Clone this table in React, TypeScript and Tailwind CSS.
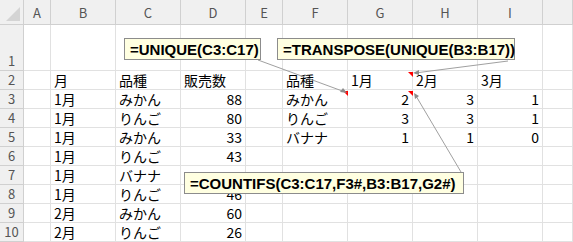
import React from "react";

type Cell = { t: string; r?: boolean };

const cols = [
  { l: "A", w: "w-[27px]" },
  { l: "B", w: "w-[65px]" },
  { l: "C", w: "w-[65px]" },
  { l: "D", w: "w-[65px]" },
  { l: "E", w: "w-[37px]" },
  { l: "F", w: "w-[65px]" },
  { l: "G", w: "w-[65px]" },
  { l: "H", w: "w-[65px]" },
  { l: "I", w: "w-[65px]" },
  { l: "", w: "w-[30px]" },
];

const L = (t: string): Cell => ({ t });
const N = (t: string): Cell => ({ t, r: true });
const E: Cell = { t: "" };

const rows: { n: string; h: string; cells: Cell[] }[] = [
  { n: "1", h: "h-[46px]", cells: [E, E, E, E, E, E, E, E, E, E] },
  { n: "2", h: "h-[19px]", cells: [E, L("月"), L("品種"), L("販売数"), E, L("品種"), L("1月"), L("2月"), L("3月"), E] },
  { n: "3", h: "h-[19px]", cells: [E, L("1月"), L("みかん"), N("88"), E, L("みかん"), N("2"), N("3"), N("1"), E] },
  { n: "4", h: "h-[19px]", cells: [E, L("1月"), L("りんご"), N("80"), E, L("りんご"), N("3"), N("3"), N("1"), E] },
  { n: "5", h: "h-[19px]", cells: [E, L("1月"), L("みかん"), N("33"), E, L("バナナ"), N("1"), N("1"), N("0"), E] },
  { n: "6", h: "h-[19px]", cells: [E, L("1月"), L("りんご"), N("43"), E, E, E, E, E, E] },
  { n: "7", h: "h-[19px]", cells: [E, L("1月"), L("バナナ"), E, E, E, E, E, E, E] },
  { n: "8", h: "h-[19px]", cells: [E, L("1月"), L("りんご"), N("46"), E, E, E, E, E, E] },
  { n: "9", h: "h-[19px]", cells: [E, L("2月"), L("みかん"), N("60"), E, E, E, E, E, E] },
  { n: "10", h: "h-[19px]", cells: [E, L("2月"), L("りんご"), N("26"), E, E, E, E, E, E] },
];

const cellFont = "font-['Noto_Sans_CJK_JP','Noto_Sans',sans-serif]";
const noteFont = "font-['Liberation_Sans',Arial,sans-serif]";

function Note({ text, cls }: { text: string; cls: string }) {
  return (
    <div
      className={`absolute ${cls} h-[22px] flex items-center px-[5px] bg-[#ffffe1] border border-[#8c8c8c] text-black font-bold text-[15px] leading-none ${noteFont} whitespace-nowrap`}
    >
      {text}
    </div>
  );
}

export default function App() {
  return (
    <div className={`relative w-[573px] h-[242px] overflow-hidden bg-white ${cellFont}`}>
      {/* Column header row */}
      <div className="flex h-[25px] bg-[#f0f0f0]">
        <div className="w-[24px] shrink-0 border-r border-b border-[#d0d0d0] relative">
          <svg className="absolute right-[3px] bottom-[3px]" width="14" height="14" viewBox="0 0 14 14">
            <polygon points="14,0 14,14 0,14" fill="#d4d4d4" />
          </svg>
        </div>
        {cols.map((c, i) => (
          <div
            key={i}
            className={`${c.w} shrink-0 flex items-center justify-center border-r border-b border-[#d0d0d0] text-[13px] text-[#555] pt-[1px]`}
          >
            {c.l}
          </div>
        ))}
      </div>
      {rows.map((row) => (
        <div key={row.n} className={`flex ${row.h}`}>
          <div className="w-[24px] shrink-0 flex items-end justify-center pb-[1px] bg-[#f0f0f0] border-r border-b border-[#d0d0d0] text-[13px] text-[#555] leading-[17px]">
            {row.n}
          </div>
          {row.cells.map((c, i) => (
            <div
              key={i}
              className={`${cols[i].w} shrink-0 flex items-end ${c.r ? "justify-end pr-[3px]" : "justify-start pl-[3px]"} border-r border-b border-[#e1e1e1] text-[14px] text-black leading-[18px] whitespace-nowrap overflow-hidden`}
            >
              {c.t}
            </div>
          ))}
        </div>
      ))}

      {/* comment indicators, connectors */}
      <svg className="absolute left-0 top-0 pointer-events-none" width="573" height="242" viewBox="0 0 573 242">
        <polygon points="343,91 348,91 348,96" fill="#ff0000" />
        <polygon points="408,72 413,72 413,77" fill="#ff0000" />
        <polygon points="408,91 413,91 413,96" fill="#ff0000" />
        <line x1="258" y1="60" x2="345" y2="92" stroke="#a0a0a0" strokeWidth="1" />
        <polygon points="347,93 340,92 343,88" fill="#8c8c8c" />
        <line x1="508" y1="61" x2="415" y2="73" stroke="#a0a0a0" strokeWidth="1" />
        <polygon points="413,73 419,70 419,75" fill="#8c8c8c" />
        <line x1="461" y1="172" x2="416" y2="96" stroke="#a0a0a0" strokeWidth="1" />
        <polygon points="414,93 415,99 419,96" fill="#8c8c8c" />
      </svg>

      <Note text="=UNIQUE(C3:C17)" cls="left-[124px] top-[38px] w-[137px]" />
      <Note text="=TRANSPOSE(UNIQUE(B3:B17))" cls="left-[277px] top-[38px] w-[238px]" />
      <Note text="=COUNTIFS(C3:C17,F3#,B3:B17,G2#)" cls="left-[184px] top-[172px] w-[280px]" />
    </div>
  );
}
